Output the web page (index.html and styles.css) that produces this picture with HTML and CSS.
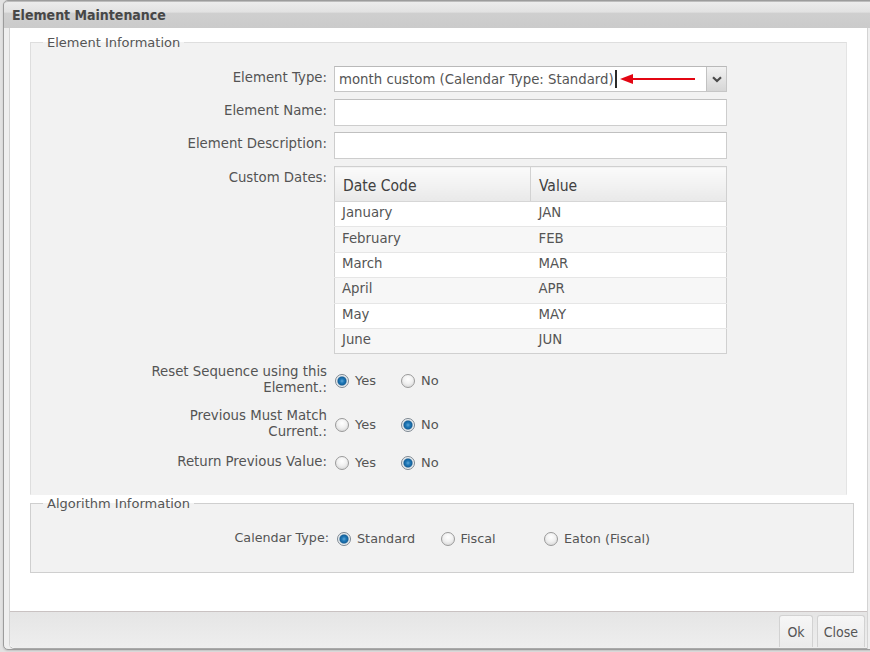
FILE: index.html
```html
<!DOCTYPE html>
<html>
<head>
<meta charset="utf-8">
<title>Element Maintenance</title>
<link rel="stylesheet" href="styles.css">
</head>
<body>
<div class="dialog">
  <div class="titlebar">Element Maintenance</div>
  <div class="panel">
    <div class="content">
      <fieldset class="fs fs-info">
        <legend>Element Information</legend>
        <div class="row row-type">
          <label class="lbl">Element Type:</label>
          <div class="select">
            <span class="select-text">month custom (Calendar Type: Standard)</span><span class="caret"></span>
            <svg class="annot" width="80" height="12" viewBox="0 0 80 12"><polygon points="0,6 13,1 13,11" fill="#e30613"/><rect x="12" y="5" width="63" height="2" fill="#e30613"/></svg>
            <span class="select-btn"><svg width="10" height="7" viewBox="0 0 10 7"><path d="M1 1.2 L5 5 L9 1.2" fill="none" stroke="#4a4a4a" stroke-width="2.2"/></svg></span>
          </div>
        </div>
        <div class="row row-name">
          <label class="lbl">Element Name:</label>
          <div class="input"></div>
        </div>
        <div class="row row-desc">
          <label class="lbl">Element Description:</label>
          <div class="input"></div>
        </div>
        <div class="row row-dates">
          <label class="lbl">Custom Dates:</label>
          <table class="grid">
            <thead>
              <tr><th class="c1">Date Code</th><th>Value</th></tr>
            </thead>
            <tbody>
              <tr><td>January</td><td>JAN</td></tr>
              <tr class="alt"><td>February</td><td>FEB</td></tr>
              <tr><td>March</td><td>MAR</td></tr>
              <tr class="alt"><td>April</td><td>APR</td></tr>
              <tr><td>May</td><td>MAY</td></tr>
              <tr class="alt"><td>June</td><td>JUN</td></tr>
            </tbody>
          </table>
        </div>
        <div class="rrow rrow-reset">
          <label class="rlbl">Reset Sequence using this Element.:</label>
          <div class="opts">
            <span class="opt"><span class="radio on"></span>Yes</span>
            <span class="opt"><span class="radio"></span>No</span>
          </div>
        </div>
        <div class="rrow rrow-prev">
          <label class="rlbl">Previous Must Match Current.:</label>
          <div class="opts">
            <span class="opt"><span class="radio"></span>Yes</span>
            <span class="opt"><span class="radio on"></span>No</span>
          </div>
        </div>
        <div class="rrow rrow-ret">
          <label class="rlbl">Return Previous Value:</label>
          <div class="opts">
            <span class="opt"><span class="radio"></span>Yes</span>
            <span class="opt"><span class="radio on"></span>No</span>
          </div>
        </div>
      </fieldset>
      <fieldset class="fs fs-algo">
        <legend>Algorithm Information</legend>
        <div class="arow">
          <label class="albl">Calendar Type:</label>
          <div class="aopts">
            <span class="aopt"><span class="radio on"></span>Standard</span>
            <span class="aopt"><span class="radio"></span>Fiscal</span>
            <span class="aopt aopt-last"><span class="radio"></span>Eaton (Fiscal)</span>
          </div>
        </div>
      </fieldset>
    </div>
    <div class="footer">
      <button class="btn">Ok</button>
      <button class="btn btn-close">Close</button>
    </div>
  </div>
</div>
</body>
</html>
```
FILE: styles.css
```css
html, body {
  margin: 0;
  padding: 0;
  height: 652px;
  overflow: hidden;
}
body {
  background: #e2e2e2;
  font-family: "DejaVu Sans", Verdana, sans-serif;
  font-size: 13.3px;
  color: #545454;
}
.dialog {
  margin-left: 3px;
  width: 874px;
  height: 650px;
  border: 1px solid #9c9c9c;
  border-radius: 5px;
  background: #efefef;
  box-sizing: border-box;
  display: flex;
  flex-direction: column;
  box-shadow: 0 1px 2px rgba(0,0,0,0.15);
}
.titlebar {
  height: 27px;
  flex: none;
  box-sizing: border-box;
  border-top: 1px solid #bdbdbd;
  border-radius: 4px 4px 0 0;
  background: linear-gradient(#ececec 0%, #e2e2e2 38%, #cfcfcf 44%, #cbcbcb 100%);
  font-family: "DejaVu Sans Condensed", "DejaVu Sans", sans-serif;
  font-weight: bold;
  font-size: 14px;
  color: #474747;
  padding: 5px 0 0 8px;
  line-height: 17px;
}
.panel {
  flex: 1;
  margin: 0 7px 0 5px;
  width: 859px;
  box-sizing: border-box;
  border-left: 1px solid #d3d3d3;
  border-right: 1px solid #d3d3d3;
  border-bottom: 1px solid #a9a9a9;
  border-radius: 0 0 0 5px;
  background: #fff;
  display: flex;
  flex-direction: column;
}
.content {
  flex: 1;
  padding: 6px 0 0 20px;
}
.fs {
  margin: 0;
  padding: 0;
  background: #f2f2f2;
  border: 1px solid #d4d4d4;
  min-width: 0;
}
.fs legend {
  margin-left: 12px;
  padding: 0 4px;
  font-size: 13px;
  line-height: 17px;
  color: #555;
}
.fs-info {
  width: 817px;
  box-sizing: border-box;
  border-color: #dedede;
  border-bottom-color: #f2f2f2;
  border-right-color: #e4e4e4;
  padding: 15px 0 23px 0;
}
.fs-algo {
  width: 824px;
  box-sizing: border-box;
  margin-top: 0;
  border-color: #cfcfcf;
  padding: 16px 0 25px 0;
}
.row {
  display: flex;
  align-items: flex-start;
  margin-bottom: 7px;
}
.row-name { margin-bottom: 6px; }
.row-dates { margin-bottom: 10px; }
.lbl {
  width: 296px;
  margin-right: 7px;
  text-align: right;
  line-height: 18px;
  padding-top: 3px;
  flex: none;
}
.select {
  position: relative;
  width: 393px;
  height: 26px;
  box-sizing: border-box;
  border: 1px solid #c6c6c6;
  border-top-color: #b9b9b9;
  background: #fff;
  display: flex;
  align-items: center;
  padding-left: 4px;
}
.select-text {
  font-size: 13.3px;
  color: #555;
  white-space: nowrap;
}
.caret {
  display: inline-block;
  width: 2px;
  height: 18px;
  background: #2b2b2b;
  margin-left: 1px;
}
.annot {
  position: absolute;
  left: 285px;
  top: 6px;
}
.select-btn {
  margin-left: auto;
  width: 20px;
  height: 24px;
  box-sizing: border-box;
  border-left: 1px solid #c2c2c2;
  background: linear-gradient(#f2f2f2, #d6d6d6);
  display: flex;
  align-items: center;
  justify-content: center;
}
.input {
  width: 393px;
  height: 27px;
  box-sizing: border-box;
  border: 1px solid #cdcdcd;
  border-top-color: #c0c0c0;
  background: #fff;
}
.grid {
  width: 393px;
  border-collapse: collapse;
  border: 1px solid #d0d0d0;
  background: #fff;
  table-layout: fixed;
}
.grid th {
  height: 35px;
  padding: 3px 0 0 8px;
  box-sizing: border-box;
  text-align: left;
  font-family: "DejaVu Sans Condensed", "DejaVu Sans", sans-serif;
  font-weight: normal;
  font-size: 15.5px;
  color: #404040;
  background: linear-gradient(#fbfbfb, #e9e9e9);
  border-bottom: 1px solid #d6d6d6;
}
.grid th.c1 {
  width: 196px;
  border-right: 1px solid #d2d2d2;
}
.grid td {
  height: 25.4px;
  padding: 0 0 3px 7px;
  box-sizing: border-box;
  font-size: 13.3px;
  color: #555;
  border-top: 1px solid #e6e6e6;
}
.grid td + td { padding-left: 8px; }
.grid tr.alt td { background: #f7f7f7; }
.rrow {
  display: flex;
  align-items: center;
  margin-bottom: 12px;
}
.rrow-prev { margin-bottom: 13px; }
.rrow-ret { margin-bottom: 0; }
.rlbl {
  width: 296px;
  margin-right: 7px;
  padding-left: 120px;
  box-sizing: border-box;
  text-align: right;
  line-height: 16px;
  flex: none;
}
.opts {
  display: flex;
  padding-top: 2px;
}
.opt {
  width: 66px;
  display: flex;
  align-items: center;
  font-size: 13px;
  line-height: 16px;
  color: #555;
  white-space: nowrap;
}
.radio {
  width: 14px;
  height: 14px;
  box-sizing: border-box;
  border-radius: 50%;
  border: 1px solid #9a9a9a;
  background: radial-gradient(circle at 50% 35%, #ffffff 0%, #f1f1f1 45%, #cfcfcf 100%);
  margin: 0 6px 0 1px;
  flex: none;
}
.radio.on {
  border-color: #7d8791;
  background: radial-gradient(circle at 50% 50%, #5fa6d6 0%, #1f79b8 25%, #14609a 48%, #8aa9c0 54%, #eef1f3 62%, #d6dbdf 100%);
}
.arow {
  display: flex;
  align-items: center;
}
.albl {
  width: 298px;
  margin-right: 7px;
  text-align: right;
  font-size: 12.7px;
  line-height: 18px;
  flex: none;
}
.aopts {
  display: flex;
  padding-top: 3px;
}
.aopt {
  width: 103.5px;
  display: flex;
  align-items: center;
  font-size: 12.8px;
  line-height: 16px;
  color: #555;
  white-space: nowrap;
}
.aopt-last { width: 130px; }
.aopt .radio { margin-right: 6px; }
.footer {
  flex: none;
  height: 37px;
  box-sizing: border-box;
  border-top: 1px solid #c9c2c2;
  border-radius: 0 0 0 5px;
  background: linear-gradient(#e5e5e5, #eeeeee);
  display: flex;
  justify-content: flex-end;
  align-items: flex-end;
  gap: 4px;
  padding: 0 2px 1px 0;
}
.btn {
  height: 32px;
  box-sizing: border-box;
  border: 1px solid #d2d2d2;
  border-bottom: none;
  border-radius: 3px 3px 0 0;
  background: linear-gradient(#f6f6f6, #ebebeb);
  font-family: "DejaVu Sans Condensed", "DejaVu Sans", sans-serif;
  font-size: 14px;
  color: #555;
  padding: 0 7px;
  margin: 0;
}
.btn-close { padding: 0 6px; }
```
